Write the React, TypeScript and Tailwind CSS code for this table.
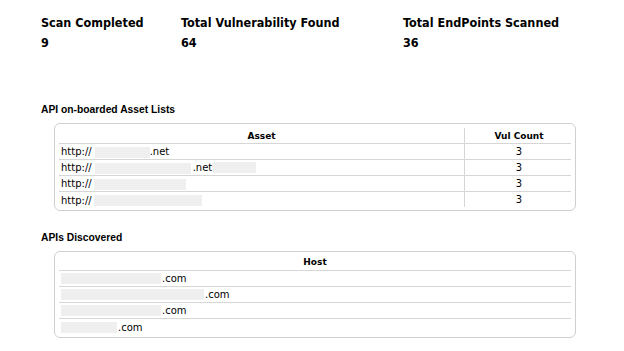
import React from "react";

const Blk = ({ w }: { w: number }) => (
  <span className="inline-block h-[11px] bg-[#efefef] align-middle" style={{ width: w }} />
);

const stats = [
  { label: "Scan Completed", value: "9", w: "w-[140px]" },
  { label: "Total Vulnerability Found", value: "64", w: "w-[222px]" },
  { label: "Total EndPoints Scanned", value: "36", w: "w-[200px]" },
];

const assets: React.ReactNode[] = [
  <>
    <span>http://</span>
    <span className="ml-[3px]"><Blk w={55} /></span>
    <span>.net</span>
  </>,
  <>
    <span>http://</span>
    <span className="ml-[3px]"><Blk w={96} /></span>
    <span className="ml-[2px]">.net</span>
    <Blk w={44} />
  </>,
  <>
    <span>http://</span>
    <span className="ml-[2px]"><Blk w={92} /></span>
  </>,
  <>
    <span>http://</span>
    <span className="ml-[2px]"><Blk w={108} /></span>
  </>,
];

const hosts: [number][] = [[100], [143], [100], [56]];

export default function App() {
  return (
    <div
      className="w-[624px] h-[351px] bg-white text-black overflow-hidden"
      style={{ fontFamily: '"DejaVu Sans", Verdana, sans-serif' }}
    >
      <div
        className="flex pl-[41px] pt-[15px]"
        style={{ fontFamily: '"DejaVu Sans Condensed", "DejaVu Sans", Tahoma, sans-serif' }}
      >
        {stats.map((s) => (
          <div key={s.label} className={`${s.w} flex flex-col gap-[5px]`}>
            <div className="text-[12.5px] leading-[15px] font-bold">{s.label}</div>
            <div className="text-[12.5px] leading-[15px] font-bold">{s.value}</div>
          </div>
        ))}
      </div>

      <div
        className="pl-[41px] mt-[54px] text-[10.3px] leading-[12px] font-bold"
        style={{ fontFamily: '"Liberation Sans", Arial, sans-serif' }}
      >
        API on-boarded Asset Lists
      </div>

      <div className="ml-[54px] mt-[7px] w-[522px] border border-[#cfcfcf] rounded-[6px] px-[4px] pb-[2px]">
        <div className="grid grid-cols-[405px_109px] border-b border-[#d6d6d6] h-[20px]">
          <div className="text-[9px] leading-[13px] font-bold text-center pt-[6px]">Asset</div>
          <div className="mt-[4px] border-l border-[#d6d6d6] text-[9px] leading-[13px] font-bold text-center pt-[2px]">
            Vul Count
          </div>
        </div>
        {assets.map((a, i) => (
          <div
            key={i}
            className={`grid grid-cols-[405px_109px] h-[16px] ${i < 3 ? "border-b border-[#d6d6d6]" : ""}`}
          >
            <div className="text-[10px] leading-[15px] pl-[2px] flex items-center whitespace-nowrap">{a}</div>
            <div className={`border-l border-[#d6d6d6] text-[10px] leading-[15px] text-center ${i === 3 ? "mb-[1px]" : ""}`}>3</div>
          </div>
        ))}
      </div>

      <div
        className="pl-[41px] mt-[21px] text-[10.3px] leading-[12px] font-bold"
        style={{ fontFamily: '"Liberation Sans", Arial, sans-serif' }}
      >
        APIs Discovered
      </div>

      <div className="ml-[54px] mt-[7px] w-[522px] border border-[#cfcfcf] rounded-[6px] px-[4px] pb-[2px]">
        <div className="border-b border-[#d6d6d6] h-[19px] text-[9px] leading-[13px] font-bold text-center pt-[4px]">
          Host
        </div>
        {hosts.map(([w], i) => (
          <div
            key={i}
            className={`h-[16px] flex items-center pl-[2px] text-[10px] leading-[15px] whitespace-nowrap ${i < 3 ? "border-b border-[#d6d6d6]" : ""}`}
          >
            <Blk w={w} />
            <span className="ml-[1px]">.com</span>
          </div>
        ))}
      </div>
    </div>
  );
}
